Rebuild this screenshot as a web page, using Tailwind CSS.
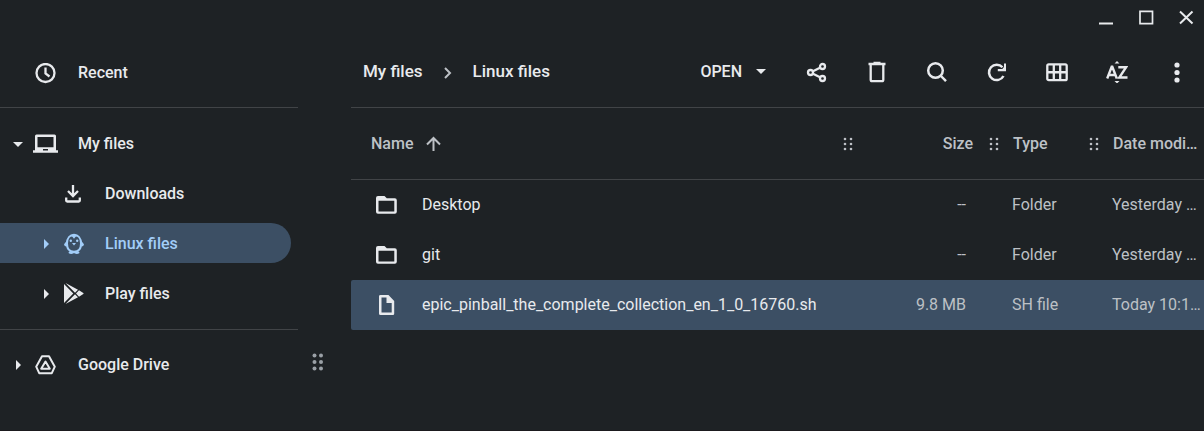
<!DOCTYPE html>
<html lang="en">
<head>
<meta charset="utf-8">
<meta name="viewport" content="width=device-width, initial-scale=1">
<title>Files</title>
<script src="https://cdn.jsdelivr.net/npm/@tailwindcss/browser@4"></script>
</head>
<body class="flex min-h-screen flex-col overflow-x-hidden border-b border-[#1b1a1e] bg-[#1e2225] font-['Roboto',sans-serif] text-base text-[#e8eaed]">
<svg class="hidden" aria-hidden="true">
  <symbol id="grip" viewBox="0 0 10 14"><g fill="currentColor"><circle cx="2" cy="2" r="1.3"/><circle cx="8" cy="2" r="1.3"/><circle cx="2" cy="7" r="1.3"/><circle cx="8" cy="7" r="1.3"/><circle cx="2" cy="12" r="1.3"/><circle cx="8" cy="12" r="1.3"/></g></symbol>
  <symbol id="right" viewBox="0 0 6 10"><path d="M0 0l5 5-5 5z" fill="currentColor"/></symbol>
  <symbol id="down" viewBox="0 0 10 5"><path d="M0 0h10l-5 5z" fill="currentColor"/></symbol>
  <symbol id="folder" viewBox="0 0 21 20"><path fill="currentColor" fill-rule="evenodd" d="M2 1H8.500L10.800 3.300H18.800A2 2 0 0 1 20.800 5.300V16.800A2 2 0 0 1 18.800 18.800H2A2 2 0 0 1 0 16.800V3A2 2 0 0 1 2 1M2.500 5.800V16.500H18.300V5.800Z"/></symbol>
</svg>

<header class="flex h-9 shrink-0 items-center justify-end gap-6 pr-2.5">
  <button aria-label="Minimize" class="flex size-4 items-center justify-center"><svg class="size-4" viewBox="0 0 16 16"><path d="M1 13.500h14" stroke="currentColor" stroke-width="2"/></svg></button>
  <button aria-label="Maximize" class="flex size-4 items-center justify-center"><svg class="size-4" viewBox="0 0 16 16"><path d="M2 1.300h12.500v12.400H2z" fill="none" stroke="currentColor" stroke-width="1.700"/></svg></button>
  <button aria-label="Close" class="flex size-4 items-center justify-center"><svg class="size-4" viewBox="0 0 16 16"><path d="M2 1.500l12.500 12M14.500 1.500l-12.500 12" stroke="currentColor" stroke-width="2"/></svg></button>
</header>

<div class="flex grow">
  <nav class="w-[298px] shrink-0 pt-[11px] font-medium" aria-label="Locations">
    <a href="#" class="flex h-[50px] items-center pt-0.5 pl-[35px]">
      <svg class="mr-[22px] size-[21px]" viewBox="0 0 21 21" fill="none" stroke="currentColor" stroke-width="2.300"><circle cx="10.500" cy="10" r="9"/><path d="M10.500 4.500v6l4 3"/></svg>Recent</a>
    <hr class="my-2.5 border-[#414447]">
    <a href="#" class="flex h-[50px] items-center pt-0.5 pl-[13px]">
      <svg class="mr-2.5 h-[5px] w-2.5"><use href="#down"/></svg>
      <svg class="mr-5 h-5 w-[25px]" viewBox="0 0 25 20"><path fill="currentColor" fill-rule="evenodd" d="M3.500 .500H21.500A1.500 1.500 0 0 1 23 2V16.200H25V18.700H0V16.200H2V2A1.500 1.500 0 0 1 3.500 .500M4.500 3V13.200H20.500V3ZM10 15V16.500H15V15Z"/></svg>My files</a>
    <a href="#" class="flex h-[50px] items-center pt-0.5 pl-[65px]">
      <svg class="mr-6 h-[18px] w-4" viewBox="0 0 16 18" fill="none" stroke="currentColor" stroke-width="2.300"><path d="M8 0v11M3 6l5 5 5-5M1.200 12.500v3q0 1 1 1h11.600q1 0 1-1v-3"/></svg>Downloads</a>
    <a href="#" aria-current="page" class="my-[5px] mr-[7px] flex h-10 items-center rounded-r-full bg-[#3c4f64] pt-0.5 pl-11 text-[#a2cdf8]">
      <svg class="mr-3.5 h-2.5 w-1.5"><use href="#right"/></svg>
      <svg class="mr-[21px] h-[22px] w-5" viewBox="0 0 20 22"><path d="M10 1.800C6 1.800 3 5 3 10.500c0 5 2.500 8.300 7 8.300s7-3.300 7-8.300c0-5.500-3-8.700-7-8.700z" fill="none" stroke="currentColor" stroke-width="2"/><path fill="currentColor" d="M3 7.500L0 11.200q0 2 3 2.600zM17 7.500L20 11.200q0 2-3 2.600zM5.500 3L10 1l4.500 2q-3.500.300-4.500 2.700-1-2.400-4.500-2.700zM5 18.500h10l.500 1.500q-2.500 1.700-5 .300h-1q-2.500 1.400-5-.300zM8 10h4l-2 2.600z"/><circle cx="6.800" cy="7.800" r="1.200" fill="currentColor"/><circle cx="13.200" cy="7.800" r="1.200" fill="currentColor"/></svg>Linux files</a>
    <a href="#" class="flex h-[50px] items-center pt-0.5 pl-11">
      <svg class="mr-3.5 h-2.5 w-1.5"><use href="#right"/></svg>
      <svg class="mr-[21px] h-[22px] w-5" viewBox="0 0 20 22" fill="currentColor"><path d="M0 1v19L9.300 10.500zM1.500 0L14 6.800l-3 3zM1.500 21L14 14.200l-3-3zM15 7.300l4.300 2.600q.700.600 0 1.200L15 13.700l-3-3.200z"/></svg>Play files</a>
    <hr class="mt-[11px] mb-[9px] border-[#414447]">
    <a href="#" class="flex h-[50px] items-center pt-0.5 pl-4">
      <svg class="mr-[13px] h-2.5 w-1.5"><use href="#right"/></svg>
      <svg class="mr-[22px] h-5 w-[21px]" viewBox="0 0 21 20" fill="none" stroke="currentColor" stroke-width="2" stroke-linejoin="round"><path d="M7 1.200h7l5.800 10.500-3 6.500H4.200l-3-6.500z"/><path d="M10.500 6.500l4.300 7.200H6.200z"/></svg>Google Drive</a>
  </nav>

  <div role="separator" aria-orientation="vertical" class="flex w-[53px] shrink-0 items-start justify-center pt-[317px] pr-3.5 text-[#9aa0a6]">
    <svg class="h-[18px] w-3" viewBox="0 0 12 18" fill="currentColor"><circle cx="2.500" cy="2.500" r="2"/><circle cx="9" cy="2.500" r="2"/><circle cx="2.500" cy="9" r="2"/><circle cx="9" cy="9" r="2"/><circle cx="2.500" cy="15.500" r="2"/><circle cx="9" cy="15.500" r="2"/></svg>
  </div>

  <main class="min-w-0 grow">
    <div class="flex h-[72px] items-center justify-between border-b border-[#414447] pl-3 pr-4">
      <nav class="flex items-center text-[17px] font-medium" aria-label="Breadcrumb">
        <a href="#">My files</a>
        <svg class="mx-[21px] mt-0.5 h-3 w-2" viewBox="0 0 8 12" fill="none" stroke="#bdc1c6" stroke-width="2"><path d="M1 1l5 5-5 5"/></svg>
        <a href="#">Linux files</a>
      </nav>
      <div class="flex items-center">
        <button class="mr-10 flex items-center gap-3.5 font-medium">OPEN<svg class="h-[5px] w-2.5"><use href="#down"/></svg></button>
        <div class="flex items-center gap-[38px]">
          <button aria-label="Share"><svg class="size-[22px]" viewBox="0 0 22 22" fill="none" stroke="currentColor" stroke-width="2.300"><circle cx="4.500" cy="11.500" r="2.500"/><circle cx="16.500" cy="5.500" r="2.500"/><circle cx="16.500" cy="17.500" r="2.500"/><path d="M7 10.300l7-3.500M7 12.700l7 3.500"/></svg></button>
          <button aria-label="Delete"><svg class="size-[22px]" viewBox="0 0 22 22" fill="none" stroke="currentColor" stroke-width="2.300"><path d="M2.500 3h17M7.500 2h7M4.700 3v15.800q0 1.400 1.400 1.400h9.800q1.400 0 1.400-1.400V3"/></svg></button>
          <button aria-label="Search"><svg class="size-[22px]" viewBox="0 0 22 22" fill="none" stroke="currentColor" stroke-width="2.500"><circle cx="9.500" cy="9.500" r="7.300"/><path d="M14.500 14.500l5.500 5.700"/></svg></button>
          <button aria-label="Refresh"><svg class="size-[22px]" viewBox="0 0 22 22" fill="none" stroke="currentColor" stroke-width="2.500"><path d="M17.500 15A7.700 7.700 0 1 1 16.500 6.300"/><path d="M20 2.500v7.800h-8.200V8h4.500L18 6V2.500z" fill="currentColor" stroke="none"/></svg></button>
          <button aria-label="Grid view"><svg class="size-[22px]" viewBox="0 0 22 22" fill="none" stroke="currentColor" stroke-width="2.300"><rect x="1.300" y="3.300" width="19.400" height="15.900" rx="1.500"/><path d="M1 11.250h20M7.800 3v16M14.200 3v16"/></svg></button>
          <button aria-label="Sort options"><svg class="size-[22px]" viewBox="0 0 22 22" fill="none" stroke="currentColor" stroke-width="2.400"><path d="M1.200 17.500L5.700 5.800h.600L10.800 17.500M3 14h6M12.300 6.300h7.700L13.300 16.500h8.200"/><path d="M11 0l2.500 2.500h-5zM11 22.500l2.500-2.500h-5z" fill="currentColor" stroke="none"/></svg></button>
          <button aria-label="More"><svg class="size-[22px]" viewBox="0 0 22 22" fill="currentColor"><circle cx="11" cy="4" r="2.600"/><circle cx="11" cy="11.500" r="2.600"/><circle cx="11" cy="19" r="2.600"/></svg></button>
        </div>
      </div>
    </div>

    <table class="w-full table-fixed border-separate border-spacing-0 text-left text-[#bdc1c6]">
      <colgroup><col><col class="w-[150px]"><col class="w-[100px]"><col class="w-[111px]"></colgroup>
      <thead>
        <tr class="h-[72px]">
          <th scope="col" class="border-b border-[#414447] p-0 pl-5 font-medium"><div class="flex items-center">Name<svg class="ml-3 size-4" viewBox="0 0 16 16" fill="none" stroke="currentColor" stroke-width="2"><path d="M8.500 15V2M2 8.500L8.500 2l6.500 6.500"/></svg></div></th>
          <th scope="col" class="border-b border-[#414447] p-0 font-medium"><div class="flex items-center justify-between pr-5"><svg class="h-3.5 w-2.5"><use href="#grip"/></svg>Size</div></th>
          <th scope="col" class="border-b border-[#414447] p-0 font-medium"><div class="flex items-center gap-3.5"><svg class="-ml-1 h-3.5 w-2.5"><use href="#grip"/></svg>Type</div></th>
          <th scope="col" class="border-b border-[#414447] p-0 font-medium"><div class="flex items-center gap-3.5"><svg class="-ml-1 h-3.5 w-2.5 shrink-0"><use href="#grip"/></svg><span class="truncate pr-1">Date modified</span></div></th>
        </tr>
      </thead>
      <tbody>
        <tr class="h-[50px]">
          <td class="p-0 pl-[25px]"><div class="flex items-center gap-[25px] text-[#e8eaed]"><svg class="h-5 w-[21px]"><use href="#folder"/></svg>Desktop</div></td>
          <td class="p-0 pr-[27px] text-right">--</td><td class="p-0 pl-[19px]">Folder</td><td class="truncate p-0 pr-1 pl-[19px]">Yesterday 10:12 AM</td>
        </tr>
        <tr class="h-[50px]">
          <td class="p-0 pl-[25px]"><div class="flex items-center gap-[25px] text-[#e8eaed]"><svg class="h-5 w-[21px]"><use href="#folder"/></svg>git</div></td>
          <td class="p-0 pr-[27px] text-right">--</td><td class="p-0 pl-[19px]">Folder</td><td class="truncate p-0 pr-1 pl-[19px]">Yesterday 10:12 AM</td>
        </tr>
        <tr class="h-[50px] bg-[#3c4f64]" aria-selected="true">
          <td class="rounded-l-xs p-0 pl-[25px]"><div class="flex items-center gap-[25px] text-[#e8eaed]"><svg class="h-5 w-[21px] shrink-0" viewBox="0 0 21 20"><path fill="currentColor" fill-rule="evenodd" d="M4.500 0h8l5.700 6v12.700q0 1.300-1.300 1.300H4.500q-1.500 0-1.500-1.300V1.300Q3 0 4.500 0M5.500 2.400v15.200h10.200V8H10.500V2.400z"/></svg><span class="truncate">epic_pinball_the_complete_collection_en_1_0_16760.sh</span></div></td>
          <td class="p-0 pr-[27px] text-right">9.8 MB</td><td class="p-0 pl-[19px]">SH file</td><td class="truncate p-0 pl-[19px]">Today 10:12 AM</td>
        </tr>
      </tbody>
    </table>
  </main>
</div>
</body>
</html>
